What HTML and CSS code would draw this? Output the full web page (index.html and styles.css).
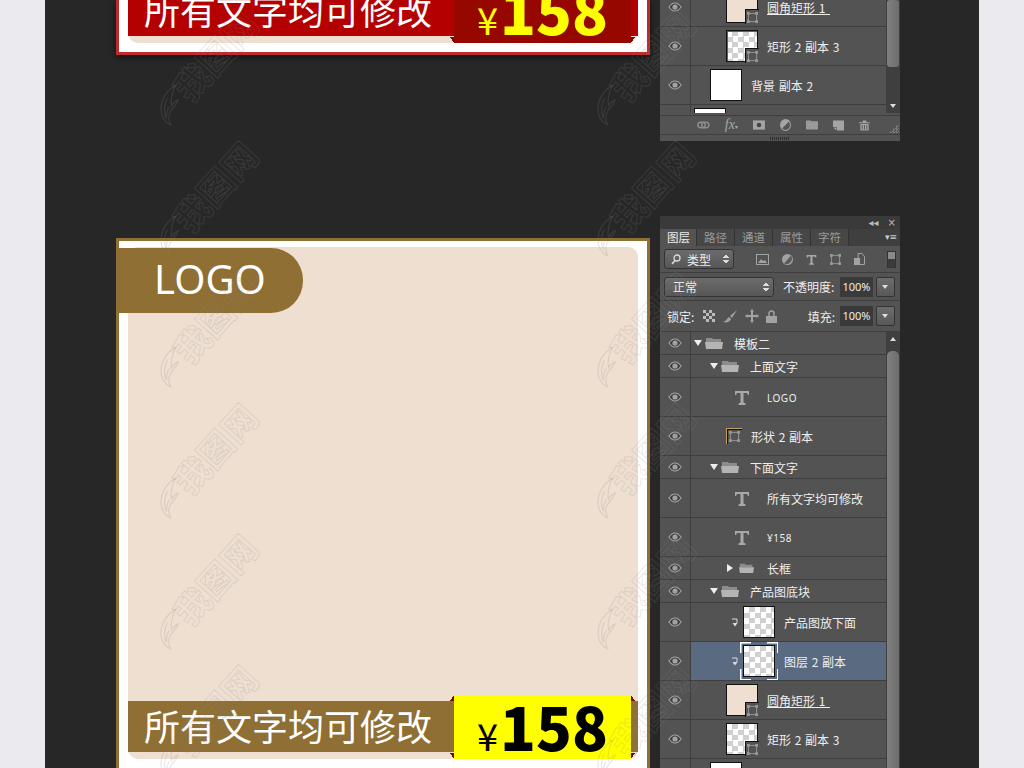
FILE: index.html
```html
<!DOCTYPE html>
<html lang="zh-CN">
<head>
  <meta charset="UTF-8" />
  <title>模板二</title>
  <link rel="stylesheet" href="styles.css">
</head>
<body>
  <svg class="defs" width="0" height="0">
    <symbol id="eye" viewBox="0 0 14 10">
      <path d="M1 5C3 2 5 1 7 1s4 1 6 4c-2 3-4 4-6 4S3 8 1 5z" fill="#3f3f3f" stroke="#a2a2a2" stroke-width="1.2"/>
      <circle cx="7" cy="5" r="2.6" fill="#a2a2a2"/>
    </symbol>
    <symbol id="folder" viewBox="0 0 18 12">
      <path d="M1 1h6l1 1h8v3H1z" fill="#8c8c8c"/>
      <path d="M0 5h18l-1 7H1z" fill="#b4b4b4"/>
    </symbol>
    <symbol id="type" viewBox="0 0 16 15">
      <path d="M1 1h14v4h-1l-1-2H9.500v9.500l2 1V15h-7v-1.500l2-1V3H3L2 5H1z" fill="#a8a8a8"/>
    </symbol>
    <symbol id="path" viewBox="0 0 12 12">
      <rect x="1.500" y="1.500" width="9" height="9" fill="none" stroke="#999"/>
      <path d="M0 0h3v3H0zM9 0h3v3H9zM0 9h3v3H0zM9 9h3v3H9z" fill="#999"/>
    </symbol>
    <symbol id="clip" viewBox="0 0 7 9">
      <path d="M1 1h5v4" fill="none" stroke="#ddd"/>
      <path d="M3.500 5h5L6 8.500z" fill="#ddd" transform="translate(-2)"/>
    </symbol>
    <symbol id="flame" viewBox="0 0 18 42">
      <path d="M12 1C4 8 0 17 1 26c1 8 6 13 12 15-3-4-4-9-2-14 2-4 5-7 6-12-3 2-5 4-6 7-2-6-1-14 1-21z"/>
      <path d="M6 15c-2 6-2 13 1 19M9 23c-2 4-2 8-1 12"/>
    </symbol>
  </svg>

  <div class="sheet">
    <main class="canvas">
      <section class="card card-red">
        <div class="card-inner">
          <div class="promo">
            <span class="promo-text">所有文字均可修改</span>
            <span class="price"><span class="yen">¥</span><b>158</b></span>
          </div>
        </div>
      </section>

      <section class="card card-gold">
        <div class="logo-tag">LOGO</div>
        <div class="card-inner">
          <div class="promo">
            <span class="promo-text">所有文字均可修改</span>
            <span class="price"><span class="yen">¥</span><b>158</b></span>
          </div>
        </div>
      </section>
    </main>

    <aside class="panels">
      <div class="panel panel-short">
        <div class="layers">
          <div class="rows rows-cut">
            <div class="row"><span class="eye"><svg><use href="#eye"/></svg></span><div class="cell in2"><span class="thumb shape beige"><i class="badge"><svg><use href="#path"/></svg></i></span><span class="name under">圆角矩形 1</span></div></div>
            <div class="row"><span class="eye"><svg><use href="#eye"/></svg></span><div class="cell in2"><span class="thumb shape checker red-edge"><i class="badge"><svg><use href="#path"/></svg></i></span><span class="name">矩形 2 副本 3</span></div></div>
            <div class="row"><span class="eye"><svg><use href="#eye"/></svg></span><div class="cell in1"><span class="thumb white"></span><span class="name">背景 副本 2</span></div></div>
            <div class="row"><span class="eye"></span><div class="cell in0"><span class="thumb white"></span></div></div>
          </div>
          <div class="scroll"><span class="scroll-thumb short"></span><span class="scroll-down"></span></div>
        </div>
        <div class="footer">
          <svg width="14" height="8" viewBox="0 0 14 8"><rect x="1" y="1" width="8" height="6" rx="3" fill="none" stroke="#8d8d8d" stroke-width="1.500"/><rect x="5" y="1" width="8" height="6" rx="3" fill="none" stroke="#8d8d8d" stroke-width="1.500"/></svg>
          <span class="fx">fx<small>▾</small></span>
          <svg width="13" height="10" viewBox="0 0 13 10"><rect width="13" height="10" fill="#a4a4a4"/><circle cx="6.500" cy="5" r="2.500" fill="#444"/></svg>
          <span class="adj"></span>
          <svg width="13" height="10" viewBox="0 0 13 10"><path d="M0 0h5l1 1h7v9H0z" fill="#9a9a9a"/></svg>
          <svg width="12" height="11" viewBox="0 0 12 11"><path d="M0 0h12v11H4V7H0z" fill="#a4a4a4"/><path d="M1 8h2v2z" fill="#ddd"/></svg>
          <svg width="12" height="11" viewBox="0 0 12 11"><path d="M0 2h12v1H0zM4 0h4v2H4zM1.500 4h9v7h-9z" fill="#a4a4a4"/><path d="M3.500 5v5M6 5v5M8.500 5v5" stroke="#555"/></svg>
        </div>
        <div class="grip-bar"><span class="grip"></span></div>
      </div>

      <div class="panel panel-tall">
        <div class="panel-head"><span class="collapse">◂◂</span><span class="close">×</span></div>
        <div class="tabs">
          <span class="tab active">图层</span>
          <span class="tab">路径</span>
          <span class="tab">通道</span>
          <span class="tab">属性</span>
          <span class="tab">字符</span>
          <span class="tab-menu">▾≡</span>
        </div>

        <div class="opt opt-filter">
          <div class="select select-kind"><svg width="10" height="11" viewBox="0 0 10 11"><circle cx="6" cy="4" r="3" fill="none" stroke="#ddd" stroke-width="1.300"/><path d="M4 6.500L1 10" stroke="#ddd" stroke-width="1.500"/></svg><span>类型</span><i class="updown"></i></div>
          <div class="filter-icons">
            <svg width="13" height="11" viewBox="0 0 13 11"><rect x=".5" y=".5" width="12" height="10" fill="none" stroke="#a2a2a2"/><path d="M2 9l3-4 2 2 2-1 2 3z" fill="#a2a2a2"/></svg>
            <svg width="11" height="11" viewBox="0 0 11 11"><circle cx="5.500" cy="5.500" r="5.500" fill="#a2a2a2"/><path d="M9 1.500a5.500 5.500 0 0 1-7 8z" fill="#5c5c5c"/></svg>
            <svg width="11" height="11"><use href="#type"/></svg>
            <svg width="11" height="11"><use href="#path"/></svg>
            <svg width="11" height="12" viewBox="0 0 11 12"><path d="M4 .5h4l2.500 3v8h-6z" fill="none" stroke="#a2a2a2"/><rect y="5" width="6" height="7" fill="#a2a2a2"/></svg>
          </div>
          <span class="toggle"></span>
        </div>

        <div class="opt opt-blend">
          <div class="select select-mode"><span>正常</span><i class="updown"></i></div>
          <span class="opt-label label-opacity">不透明度:</span>
          <span class="num">100%</span><span class="num-btn"></span>
        </div>

        <div class="opt opt-lock">
          <span class="opt-label label-lock">锁定:</span>
          <div class="lock-icons">
            <span class="lock-check"></span>
            <svg width="16" height="13" viewBox="0 0 16 13"><path d="M15 0L8 6l2 2z" fill="#a2a2a2"/><path d="M1 12c3 1 7 0 8-3L7 7C5 8 5 11 1 12z" fill="#a2a2a2"/></svg>
            <svg width="14" height="14" viewBox="0 0 14 14"><path d="M7 0l2 2.500H8v3.500h3.500V5L14 7l-2.500 2V8H8v3.500h1L7 14l-2-2.500h1V8H2.500v1L0 7l2.500-2v1H6V2.500H5z" fill="#a2a2a2"/></svg>
            <svg width="11" height="13" viewBox="0 0 11 13"><path d="M3 6V3.500a2.500 2.500 0 0 1 5 0V6" fill="none" stroke="#a2a2a2" stroke-width="1.500"/><rect y="6" width="11" height="7" fill="#a2a2a2"/></svg>
          </div>
          <span class="opt-label label-fill">填充:</span>
          <span class="num">100%</span><span class="num-btn"></span>
        </div>

        <div class="layers layers-tall">
          <div class="rows">
            <div class="row group"><span class="eye"><svg><use href="#eye"/></svg></span><div class="cell g0"><i class="arrow"></i><svg class="folder"><use href="#folder"/></svg><span class="name">模板二</span></div></div>
            <div class="row group"><span class="eye"><svg><use href="#eye"/></svg></span><div class="cell g1"><i class="arrow"></i><svg class="folder"><use href="#folder"/></svg><span class="name">上面文字</span></div></div>
            <div class="row"><span class="eye"><svg><use href="#eye"/></svg></span><div class="cell in2"><span class="thumb text-thumb"><svg><use href="#type"/></svg></span><span class="name small">LOGO</span></div></div>
            <div class="row"><span class="eye"><svg><use href="#eye"/></svg></span><div class="cell in2"><span class="mask-thumb"><svg><use href="#path"/></svg></span><span class="name">形状 2 副本</span></div></div>
            <div class="row group"><span class="eye"><svg><use href="#eye"/></svg></span><div class="cell g1"><i class="arrow"></i><svg class="folder"><use href="#folder"/></svg><span class="name">下面文字</span></div></div>
            <div class="row"><span class="eye"><svg><use href="#eye"/></svg></span><div class="cell in2"><span class="thumb text-thumb"><svg><use href="#type"/></svg></span><span class="name">所有文字均可修改</span></div></div>
            <div class="row"><span class="eye"><svg><use href="#eye"/></svg></span><div class="cell in2"><span class="thumb text-thumb"><svg><use href="#type"/></svg></span><span class="name small">¥158</span></div></div>
            <div class="row group"><span class="eye"><svg><use href="#eye"/></svg></span><div class="cell g2"><i class="arrow closed"></i><svg class="folder folder-small"><use href="#folder"/></svg><span class="name">长框</span></div></div>
            <div class="row group"><span class="eye"><svg><use href="#eye"/></svg></span><div class="cell g1"><i class="arrow"></i><svg class="folder"><use href="#folder"/></svg><span class="name">产品图底块</span></div></div>
            <div class="row"><span class="eye"><svg><use href="#eye"/></svg></span><div class="cell in3"><svg class="clip"><use href="#clip"/></svg><span class="thumb checker"></span><span class="name">产品图放下面</span></div></div>
            <div class="row selected"><span class="eye"><svg><use href="#eye"/></svg></span><div class="cell in3"><svg class="clip"><use href="#clip"/></svg><span class="thumb checker framed"></span><span class="name">图层 2 副本</span></div></div>
            <div class="row"><span class="eye"><svg><use href="#eye"/></svg></span><div class="cell in2"><span class="thumb shape beige"><i class="badge"><svg><use href="#path"/></svg></i></span><span class="name under">圆角矩形 1</span></div></div>
            <div class="row"><span class="eye"><svg><use href="#eye"/></svg></span><div class="cell in2"><span class="thumb shape checker"><i class="badge"><svg><use href="#path"/></svg></i></span><span class="name">矩形 2 副本 3</span></div></div>
            <div class="row"><span class="eye"></span><div class="cell in1"><span class="thumb white"></span></div></div>
          </div>
          <div class="scroll"><span class="scroll-up"></span><span class="scroll-thumb"></span></div>
        </div>
      </div>
    </aside>

    <div class="marks">
      <div class="mark"><svg><use href="#flame"/></svg><span>我图网</span></div>
      <div class="mark"><svg><use href="#flame"/></svg><span>我图网</span></div>
      <div class="mark"><svg><use href="#flame"/></svg><span>我图网</span></div>
      <div class="mark"><svg><use href="#flame"/></svg><span>我图网</span></div>
      <div class="mark"><svg><use href="#flame"/></svg><span>我图网</span></div>
      <div class="mark"><svg><use href="#flame"/></svg><span>我图网</span></div>
      <div class="mark"><svg><use href="#flame"/></svg><span>我图网</span></div>
      <div class="mark"><svg><use href="#flame"/></svg><span>我图网</span></div>
      <div class="mark"><svg><use href="#flame"/></svg><span>我图网</span></div>
      <div class="mark"><svg><use href="#flame"/></svg><span>我图网</span></div>
      <div class="mark"><svg><use href="#flame"/></svg><span>我图网</span></div>
      <div class="mark"><svg><use href="#flame"/></svg><span>我图网</span></div>
    </div>
  </div>
</body>
</html>
```

FILE: styles.css
```css
html, body {
  margin: 0;
  height: 768px;
  overflow: hidden;
  background: #ebebef;
  font-family: "Noto Sans CJK SC", "Noto Sans", sans-serif;
}

.defs {
  display: block;
  height: 0;
}

.sheet {
  position: relative;
  display: flex;
  gap: 10px;
  box-sizing: border-box;
  width: 934px;
  height: 768px;
  margin: 0 45px;
  padding-left: 71px;
  overflow: hidden;
  background: #272727;
}

/* canvas */
.canvas {
  width: 534px;
  flex: none;
}

.card {
  position: relative;
  box-sizing: border-box;
  padding: 6px 9px 9px;
  background: #fff;
  border: 3px solid;
}

.card-inner {
  display: flex;
  flex-direction: column;
  justify-content: flex-end;
  padding-bottom: 7px;
  border-radius: 10px;
  background: #efdfd1;
}

.card-red {
  display: flex;
  flex-direction: column;
  justify-content: flex-end;
  height: 55px;
  margin-bottom: 183px;
  border-color: #bf2a2e;
  border-top: 0;
  box-shadow: 0 2px 6px rgba(0, 0, 0, 0.6);
  overflow: hidden;
}

.card-gold {
  height: 560px;
  border-color: #8f6f33;
}

.card-gold .card-inner {
  height: 512px;
  box-sizing: border-box;
}

.logo-tag {
  position: absolute;
  top: 7px;
  left: -3px;
  width: 149px;
  height: 65px;
  padding-left: 38px;
  border-radius: 0 32px 32px 0;
  background: #8f6f33;
  color: #fff;
  font: 400 40px/61px "Noto Sans", sans-serif;
}

.promo {
  display: flex;
  flex: none;
  height: 51px;
  padding-left: 16px;
  padding-right: 7px;
  color: #fff;
}

.promo-text {
  font-size: 36px;
  font-weight: 400;
  line-height: 48px;
  white-space: nowrap;
}

.price {
  position: relative;
  display: flex;
  align-items: baseline;
  box-sizing: border-box;
  width: 177px;
  height: 64px;
  margin: -6px 0 -7px auto;
  padding-left: 23px;
  line-height: 61px;
}

.price::before,
.price::after {
  content: "";
  position: absolute;
  top: 0;
  bottom: 0;
  width: 4px;
}

.price::before {
  left: -4px;
  background: linear-gradient(to bottom right, transparent 50%, #7a0a0a 50%) top / 4px 6px no-repeat,
    linear-gradient(to top right, transparent 50%, #7a0a0a 50%) bottom / 4px 6px no-repeat;
}

.price::after {
  right: -4px;
  background: linear-gradient(to bottom left, transparent 50%, #7a0a0a 50%) top / 4px 6px no-repeat,
    linear-gradient(to top left, transparent 50%, #7a0a0a 50%) bottom / 4px 6px no-repeat;
}

.yen {
  font-size: 38px;
  font-weight: 400;
  margin-right: 2px;
}

.price b {
  font-size: 59px;
  font-weight: 900;
}

.card-red .promo { background: #b40000; }
.card-red .price { background: #960700; color: #ff0; }
.card-gold .promo { background: #8f6f33; }
.card-gold .price { background: #ff0; color: #000; }

/* layers panels */
.panels {
  display: flex;
  flex-direction: column;
  gap: 75px;
  width: 240px;
  flex: none;
}

.panel {
  display: flex;
  flex-direction: column;
  flex: none;
  background: #535353;
  color: #eee;
  font-size: 12px;
}

.panel-short { height: 141px; }
.panel-tall { height: 552px; }

.layers {
  display: flex;
  height: 113px;
  overflow: hidden;
}

.layers-tall {
  flex: 1;
  height: auto;
}

.rows {
  width: 226px;
  flex: none;
}

.rows-cut { margin-top: -12px; }

.row {
  display: flex;
  box-sizing: border-box;
  height: 39px;
  border-bottom: 1px solid #3e3e3e;
}

.row.group { height: 23px; }

.eye {
  display: flex;
  align-items: center;
  justify-content: center;
  width: 30px;
  flex: none;
  border-right: 1px solid #3e3e3e;
}

.eye svg {
  width: 14px;
  height: 10px;
}

.cell {
  display: flex;
  align-items: center;
  flex: 1;
  min-width: 0;
  white-space: nowrap;
}

.in0 { padding-left: 3px; }
.in1 { padding-left: 19px; }
.in2 { padding-left: 35px; }
.in3 { padding-left: 40px; }
.g0 { padding-left: 3px; }
.g1 { padding-left: 19px; }
.g2 { padding-left: 36px; }

.selected .cell { background: #5a6a80; }

.thumb {
  position: relative;
  box-sizing: border-box;
  width: 32px;
  height: 32px;
  flex: none;
  margin-right: 9px;
  border: 1.5px solid #111;
}

.white { background: #fff; }
.beige { background: #efdfd1; }

.checker {
  background: repeating-conic-gradient(#d0d0d0 0 25%, #fff 0 50%) 0 0 / 11px 11px;
}

.red-edge { box-shadow: inset 1px 1px 0 #d03038; }

.badge {
  position: absolute;
  right: -2px;
  bottom: -2px;
  display: flex;
  align-items: center;
  justify-content: center;
  width: 14px;
  height: 15px;
  background: #535353;
  border-top: 1.5px solid #111;
  border-left: 1.5px solid #111;
  box-sizing: border-box;
}

.badge svg {
  width: 11px;
  height: 11px;
}

.text-thumb {
  display: flex;
  align-items: center;
  justify-content: center;
  border: 0;
}

.text-thumb svg {
  width: 16px;
  height: 15px;
}

.mask-thumb {
  display: flex;
  align-items: center;
  justify-content: center;
  box-sizing: border-box;
  width: 16px;
  height: 16px;
  flex: none;
  margin-right: 9px;
  border-top: 1px solid #c8a050;
  border-left: 1px solid #c8a050;
  box-shadow: inset 1px 1px 0 #111;
}

.mask-thumb svg {
  width: 11px;
  height: 11px;
}

/* white corner brackets of the selected layer */
.framed::after {
  content: "";
  position: absolute;
  inset: -4px;
  background:
    linear-gradient(#fff, #fff) 0 0 / 11px 1.5px no-repeat,
    linear-gradient(#fff, #fff) 0 0 / 1.5px 11px no-repeat,
    linear-gradient(#fff, #fff) 100% 0 / 11px 1.5px no-repeat,
    linear-gradient(#fff, #fff) 100% 0 / 1.5px 11px no-repeat,
    linear-gradient(#fff, #fff) 0 100% / 11px 1.5px no-repeat,
    linear-gradient(#fff, #fff) 0 100% / 1.5px 11px no-repeat,
    linear-gradient(#fff, #fff) 100% 100% / 11px 1.5px no-repeat,
    linear-gradient(#fff, #fff) 100% 100% / 1.5px 11px no-repeat;
}

.clip {
  width: 7px;
  height: 9px;
  flex: none;
  margin-right: 5px;
}

.name {
  padding-top: 1px;
  line-height: 16px;
  word-spacing: 1px;
}

.name.small {
  font-family: "Noto Sans", sans-serif;
  font-size: 10px;
  letter-spacing: 0.5px;
}

.name.under {
  padding-right: 5px;
  border-bottom: 1px solid #eee;
  line-height: 13px;
}

.arrow {
  width: 0;
  height: 0;
  flex: none;
  margin-right: 3px;
  border-left: 4.5px solid transparent;
  border-right: 4.5px solid transparent;
  border-top: 6px solid #eee;
}

.arrow.closed {
  margin-right: 6px;
  border-top: 4.5px solid transparent;
  border-bottom: 4.5px solid transparent;
  border-left: 6px solid #eee;
  border-right: 0;
}

.folder {
  width: 18px;
  height: 12px;
  flex: none;
  margin-right: 11px;
}

.folder-small {
  width: 15px;
  margin-right: 13px;
}

.scroll {
  position: relative;
  display: flex;
  flex-direction: column;
  flex: 1;
  align-items: center;
  background: #3f3f3f;
}

.scroll-thumb {
  width: 12px;
  flex: none;
  margin-top: 19px;
  border-radius: 3px;
  background: linear-gradient(to right, #808080, #6d6d6d);
}

.scroll-thumb.short {
  height: 67px;
  margin-top: 0;
}

.scroll-up,
.scroll-down {
  position: absolute;
  width: 0;
  height: 0;
  border-left: 3px solid transparent;
  border-right: 3px solid transparent;
}

.scroll-up {
  top: 5px;
  border-bottom: 4px solid #ddd;
}

.scroll-down {
  top: 104px;
  border-top: 4px solid #ddd;
}

.layers-tall .scroll-thumb {
  height: 420px;
  border-radius: 5px 5px 0 0;
}

.footer {
  position: relative;
  display: flex;
  align-items: center;
  justify-content: center;
  gap: 15px;
  box-sizing: border-box;
  height: 20px;
  margin-top: 2px;
  padding-left: 37px;
  padding-right: 30px;
  border-bottom: 1px solid #3e3e3e;
  border-top: 1px solid #3e3e3e;
}

/* resize grip */
.footer::after {
  content: "";
  position: absolute;
  right: 1px;
  bottom: 1px;
  width: 10px;
  height: 10px;
  background: repeating-conic-gradient(#7c7c7c 0 25%, transparent 0 50%) 0 0 / 3px 3px;
  clip-path: polygon(100% 0, 100% 100%, 0 100%);
}

.fx {
  color: #a8a8a8;
  font: italic 14px/1 "Liberation Serif", serif;
}

.fx small {
  font-size: 6px;
  font-style: normal;
}

.adj {
  box-sizing: border-box;
  width: 12px;
  height: 12px;
  border: 1px solid #a4a4a4;
  border-radius: 50%;
  background: linear-gradient(135deg, #a4a4a4 50%, #555 50%);
}

.grip-bar {
  display: flex;
  justify-content: center;
  align-items: center;
  flex: 1;
}

.grip {
  width: 20px;
  height: 3px;
  background: repeating-linear-gradient(to right, #2e2e2e 0 1px, transparent 1px 2px);
}

.panel-head {
  display: flex;
  justify-content: flex-end;
  gap: 9px;
  box-sizing: border-box;
  height: 13px;
  padding-right: 4px;
  background: #3a3a3a;
  color: #bbb;
  font: 10px/13px "DejaVu Sans", sans-serif;
}

.tabs {
  display: flex;
  height: 17px;
  background: #3f3f3f;
}

.tab {
  box-sizing: border-box;
  width: 38px;
  padding-left: 7px;
  border-right: 1px solid #333;
  background: #474747;
  color: #9c9c9c;
  font-size: 11.5px;
  line-height: 17px;
}

.tab.active {
  width: 37px;
  background: #535353;
  color: #eee;
}

.tab-menu {
  margin-left: auto;
  padding-right: 3px;
  color: #ccc;
  font: 9px/17px "DejaVu Sans", sans-serif;
}

.opt {
  display: flex;
  align-items: center;
  box-sizing: border-box;
  padding-left: 4px;
  border-bottom: 1px solid #3e3e3e;
}

.opt-filter { height: 27px; }
.opt-blend { height: 28px; }
.opt-lock { height: 31px; }

.select {
  position: relative;
  display: flex;
  align-items: center;
  box-sizing: border-box;
  height: 20px;
  border: 1px solid #333;
  border-radius: 3px;
  background: linear-gradient(#6c6c6c, #565656);
}

.select-kind {
  gap: 6px;
  width: 70px;
  padding-left: 6px;
}

.select-mode {
  width: 110px;
  padding-left: 8px;
}

.updown {
  position: absolute;
  right: 4px;
  top: 4px;
  width: 6px;
  height: 10px;
  background:
    linear-gradient(to bottom right, transparent 50%, #ddd 50%) 0 0 / 3px 4px no-repeat,
    linear-gradient(to bottom left, transparent 50%, #ddd 50%) 3px 0 / 3px 4px no-repeat,
    linear-gradient(to top right, transparent 50%, #ddd 50%) 0 6px / 3px 4px no-repeat,
    linear-gradient(to top left, transparent 50%, #ddd 50%) 3px 6px / 3px 4px no-repeat;
}

.filter-icons {
  display: flex;
  align-items: center;
  gap: 13px;
  margin-left: 22px;
}

.toggle {
  box-sizing: border-box;
  width: 9px;
  height: 17px;
  margin-left: auto;
  margin-right: 4px;
  border: 1px solid #333;
  background: linear-gradient(#8a8a8a 50%, #3c3c3c 50%);
}

.opt-label {
  white-space: nowrap;
}

.label-opacity {
  width: 52px;
  margin-left: 9px;
  margin-right: 5px;
}

.label-lock {
  width: 36px;
  margin-left: 3px;
}

.label-fill {
  margin-left: auto;
  margin-right: 5px;
}

.lock-icons {
  display: flex;
  align-items: center;
  gap: 7px;
}

.lock-check {
  width: 12px;
  height: 12px;
  background: repeating-conic-gradient(#555 0 25%, #bbb 0 50%) 0 0 / 6px 6px;
}

.num {
  box-sizing: border-box;
  width: 33px;
  height: 20px;
  background: #3a3a3a;
  color: #eee;
  font: 11px/20px "Noto Sans", sans-serif;
  text-align: center;
}

.num-btn {
  position: relative;
  box-sizing: border-box;
  width: 19px;
  height: 20px;
  margin-left: 3px;
  margin-right: 5px;
  border: 1px solid #333;
  border-radius: 2px;
  background: linear-gradient(#6c6c6c, #585858);
}

.num-btn::after {
  content: "";
  position: absolute;
  top: 7px;
  left: 5px;
  border-left: 3.5px solid transparent;
  border-right: 3.5px solid transparent;
  border-top: 4px solid #ddd;
}

/* watermark over everything */
.marks {
  position: absolute;
  top: -2px;
  left: 106px;
  display: grid;
  grid-template-columns: repeat(2, 110px);
  grid-auto-rows: 131px;
  column-gap: 327px;
  pointer-events: none;
}

.mark {
  display: flex;
  align-items: center;
  justify-content: center;
  gap: 6px;
  transform: rotate(-48deg);
  white-space: nowrap;
}

.mark svg {
  width: 18px;
  height: 42px;
  flex: none;
  fill: none;
  stroke: rgba(135, 135, 135, 0.2);
  stroke-width: 1.2;
  transform: rotate(56deg);
}

.mark span {
  color: transparent;
  font-size: 35px;
  font-weight: 700;
  line-height: 1;
  -webkit-text-stroke: 1px rgba(135, 135, 135, 0.2);
}
```
